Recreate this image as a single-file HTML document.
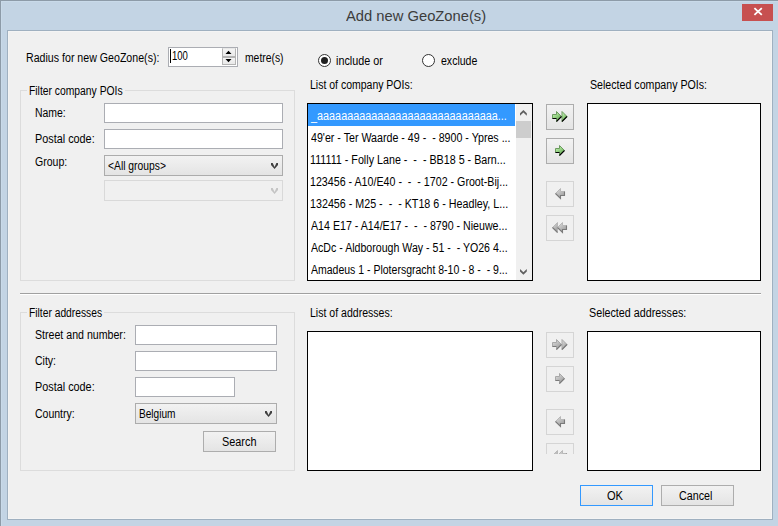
<!DOCTYPE html>
<html><head><meta charset="utf-8">
<style>
*{margin:0;padding:0;box-sizing:border-box}
html,body{width:778px;height:526px;overflow:hidden;background:#c3d4e4}
body{position:relative;font-family:"Liberation Sans",sans-serif;font-size:12px;color:#000}
.a{position:absolute}
.t{position:absolute;white-space:pre;line-height:14px;transform-origin:0 0}
.tb{position:absolute;background:#fff;border:1px solid #abadb3}
.grp{position:absolute;border:1px solid #dcdcdc}
.gl{position:absolute;background:#f0f0f0;}
.lb{position:absolute;background:#fff;border:1px solid #000}
.cb{position:absolute;border:1px solid #acacac;background:linear-gradient(#f2f2f2,#e4e4e4)}
.cbd{position:absolute;border:1px solid #d9d9d9;background:#f0f0f0}
.btn{position:absolute;border:1px solid #adadad;background:linear-gradient(#f2f2f2,#e4e4e4)}
.btnd{position:absolute;border:1px solid #d5d5d5;background:#f0f0f0}
svg{position:absolute;overflow:visible}
svg.cl{overflow:hidden}
</style></head><body>
<div class="a" style="left:0;top:0;width:778px;height:526px;background:#c3d4e4;border-left:1px solid #8d9ba8;border-top:1px solid #8d9ba8"></div>
<div class="a" style="left:1px;top:1px;width:777px;height:525px;border-left:1px solid #c9dae9;border-top:1px solid #c9dae9"></div>
<div class="a" style="left:7px;top:30px;width:766px;height:490px;border:1px solid #9fb0c0;background:#f0f0f0"></div>
<div class="a" style="left:8px;top:31px;width:764px;height:488px;border:1px solid #f4f4f4"></div>
<div class="t" style="left:346px;top:7px;font-size:15px;line-height:18px;color:#3c3c3c;transform:scaleX(0.983)">Add new GeoZone(s)</div>
<div class="a" style="left:742px;top:4px;width:31px;height:17px;background:#c75050"></div>
<svg style="left:742px;top:4px" width="31" height="17"><path d="M12.4 4.1 L19.8 10.9 M19.8 4.1 L12.4 10.9" stroke="#fff" stroke-width="1.8"/></svg>
<div class="t" style="left:26.10px;top:51px;color:#000;transform:scaleX(0.8852);">Radius for new GeoZone(s):</div>
<div class="tb" style="left:168px;top:47px;width:70px;height:20px"></div>
<div class="a" style="left:222px;top:48px;width:15px;height:18px;background:#fff"></div>
<div class="a" style="left:222px;top:48px;width:14px;height:9px;border:1px solid #b4b4b4;border-top-color:#e8e8e8;background:linear-gradient(#f4f4f4,#e9e9e9)"></div>
<div class="a" style="left:222px;top:57px;width:14px;height:8px;border:1px solid #b4b4b4;background:linear-gradient(#f4f4f4,#e9e9e9)"></div>
<svg style="left:222px;top:48px" width="14" height="18"><path d="M3.5 6 L6.5 2.8 L9.5 6 Z M3.5 11 L9.5 11 L6.5 14.2 Z" fill="#000"/></svg>
<div class="a" style="left:170px;top:49px;width:1px;height:14px;background:#000"></div>
<div class="t" style="left:171.80px;top:49px;color:#000;transform:scaleX(0.7947);">100</div>
<div class="t" style="left:245.30px;top:51px;color:#000;transform:scaleX(0.8628);">metre(s)</div>
<div class="a" style="left:318px;top:54px;width:13px;height:13px;border-radius:50%;border:1px solid #333;background:#fff"></div>
<div class="a" style="left:321px;top:57px;width:7px;height:7px;border-radius:50%;background:#1f1f1f"></div>
<div class="t" style="left:336.10px;top:54px;color:#000;transform:scaleX(0.8980);">include or</div>
<div class="a" style="left:422px;top:54px;width:13px;height:13px;border-radius:50%;border:1px solid #333;background:#fff"></div>
<div class="t" style="left:441.00px;top:54px;color:#000;transform:scaleX(0.8780);">exclude</div>
<div class="grp" style="left:20px;top:90px;width:275px;height:191px"></div>
<div class="gl" style="left:27px;top:84px;width:98px;height:12px"></div>
<div class="t" style="left:29.00px;top:84px;color:#000;transform:scaleX(0.8611);">Filter company POIs</div>
<div class="t" style="left:35.00px;top:106px;color:#000;transform:scaleX(0.8706);">Name:</div>
<div class="tb" style="left:104px;top:103px;width:179px;height:20px"></div>
<div class="t" style="left:35.00px;top:132px;color:#000;transform:scaleX(0.9031);">Postal code:</div>
<div class="tb" style="left:104px;top:129px;width:179px;height:20px"></div>
<div class="t" style="left:34.90px;top:155px;color:#000;transform:scaleX(0.8778);">Group:</div>
<div class="cb" style="left:104px;top:155px;width:179px;height:21px"></div>
<div class="t" style="left:108.20px;top:159px;color:#000;transform:scaleX(0.8597);">&lt;All groups&gt;</div>
<svg style="left:271px;top:163px" width="7.2" height="6.2" class="cl"><polygon points="0,0 1.7,0 3.55,3.9 5.4,0 7.1,0 7.1,2 3.55,6 0,2" fill="#404040"/></svg>
<div class="cbd" style="left:104px;top:180px;width:179px;height:21px"></div>
<svg style="left:271px;top:188px" width="7.2" height="6.2" class="cl"><polygon points="0,0 1.7,0 3.55,3.9 5.4,0 7.1,0 7.1,2 3.55,6 0,2" fill="#c4c4c4"/></svg>
<div class="t" style="left:310.30px;top:78px;color:#000;transform:scaleX(0.8741);">List of company POIs:</div>
<div class="lb" style="left:307px;top:103px;width:226px;height:178px"></div>
<div class="a" style="left:308px;top:104px;width:207px;height:22px;background:#3399ff"></div>
<div class="a" style="left:516px;top:104px;width:16px;height:176px;background:#f0f0f0"></div>
<div class="a" style="left:516px;top:121px;width:15px;height:17px;background:#cdcdcd"></div>
<svg style="left:520px;top:110px" width="8" height="7"><polygon points="0,3.3 3.4,0 6.8,3.3 6.8,5.8 3.4,2.5 0,5.8" fill="#606060"/></svg>
<svg style="left:520px;top:269px" width="8" height="7"><polygon points="0,0 3.4,3.3 6.8,0 6.8,2.5 3.4,5.8 0,2.5" fill="#606060"/></svg>
<div class="t" style="left:311.00px;top:109px;color:#fff;transform:scaleX(0.9028);">_aaaaaaaaaaaaaaaaaaaaaaaaaaaaaa...</div>
<div class="t" style="left:311.00px;top:131px;color:#000;transform:scaleX(0.8884);">49'er - Ter Waarde - 49 -  - 8900 - Ypres ...</div>
<div class="t" style="left:310.00px;top:153px;color:#000;transform:scaleX(0.8940);">111111 - Folly Lane -  -  - BB18 5 - Barn...</div>
<div class="t" style="left:310.00px;top:175px;color:#000;transform:scaleX(0.8891);">123456 - A10/E40 -  -  - 1702 - Groot-Bij...</div>
<div class="t" style="left:310.00px;top:197px;color:#000;transform:scaleX(0.8932);">132456 - M25 -  -  - KT18 6 - Headley, L...</div>
<div class="t" style="left:311.00px;top:219px;color:#000;transform:scaleX(0.8869);">A14 E17 - A14/E17 -  -  - 8790 - Nieuwe...</div>
<div class="t" style="left:311.00px;top:241px;color:#000;transform:scaleX(0.8829);">AcDc - Aldborough Way - 51 -  - YO26 4...</div>
<div class="t" style="left:311.00px;top:263px;color:#000;transform:scaleX(0.8750);">Amadeus 1 - Plotersgracht 8-10 - 8 -  - 9...</div>
<div class="t" style="left:590.30px;top:78px;color:#000;transform:scaleX(0.8862);">Selected company POIs:</div>
<div class="lb" style="left:587px;top:103px;width:174px;height:178px"></div>
<div class="btn" style="left:546px;top:104px;width:28px;height:26px"></div>
<div class="btn" style="left:546px;top:138px;width:28px;height:26px"></div>
<div class="btnd" style="left:546px;top:181px;width:28px;height:26px"></div>
<div class="btnd" style="left:546px;top:215px;width:28px;height:26px"></div>
<div class="a" style="left:20px;top:293px;width:741px;height:1px;background:#a0a0a0"></div>
<div class="a" style="left:20px;top:294px;width:741px;height:1px;background:#fff"></div>
<div class="grp" style="left:20px;top:312px;width:275px;height:159px"></div>
<div class="gl" style="left:27px;top:306px;width:77px;height:12px"></div>
<div class="t" style="left:28.90px;top:306px;color:#000;transform:scaleX(0.8560);">Filter addresses</div>
<div class="t" style="left:35.10px;top:328px;color:#000;transform:scaleX(0.8842);">Street and number:</div>
<div class="tb" style="left:135px;top:325px;width:142px;height:20px"></div>
<div class="t" style="left:34.60px;top:354px;color:#000;transform:scaleX(0.8739);">City:</div>
<div class="tb" style="left:135px;top:351px;width:142px;height:20px"></div>
<div class="t" style="left:35.10px;top:380px;color:#000;transform:scaleX(0.9031);">Postal code:</div>
<div class="tb" style="left:135px;top:377px;width:100px;height:20px"></div>
<div class="t" style="left:34.60px;top:407px;color:#000;transform:scaleX(0.8756);">Country:</div>
<div class="cb" style="left:135px;top:403px;width:142px;height:21px"></div>
<div class="t" style="left:139.10px;top:407px;color:#000;transform:scaleX(0.8429);">Belgium</div>
<svg style="left:265px;top:411px" width="7.2" height="6.2" class="cl"><polygon points="0,0 1.7,0 3.55,3.9 5.4,0 7.1,0 7.1,2 3.55,6 0,2" fill="#404040"/></svg>
<div class="btn" style="left:203px;top:431px;width:73px;height:21px"></div>
<div class="t" style="left:221.90px;top:435px;color:#000;transform:scaleX(0.9056);">Search</div>
<div class="t" style="left:310.10px;top:306px;color:#000;transform:scaleX(0.8783);">List of addresses:</div>
<div class="lb" style="left:307px;top:331px;width:226px;height:140px"></div>
<div class="t" style="left:589.00px;top:306px;color:#000;transform:scaleX(0.8944);">Selected addresses:</div>
<div class="lb" style="left:587px;top:331px;width:174px;height:140px"></div>
<div class="btnd" style="left:546px;top:332px;width:28px;height:26px"></div>
<div class="btnd" style="left:546px;top:366px;width:28px;height:26px"></div>
<div class="btnd" style="left:546px;top:409px;width:28px;height:26px"></div>
<div class="a" style="left:546px;top:443px;width:28px;height:11px;overflow:hidden"><div class="btnd" style="left:0;top:0;width:28px;height:26px"></div></div>
<svg style="left:0;top:0" width="778" height="526"><defs><linearGradient id="gg" x1="0" y1="0" x2="0.7" y2="1"><stop offset="0" stop-color="#d4fcc6"/><stop offset="0.5" stop-color="#98d486"/><stop offset="1" stop-color="#5da04c"/></linearGradient><linearGradient id="gy" x1="0" y1="0" x2="0.7" y2="1"><stop offset="0" stop-color="#e2e2e2"/><stop offset="0.5" stop-color="#bfbfbf"/><stop offset="1" stop-color="#9c9c9c"/></linearGradient><clipPath id="cll"><rect x="540" y="0" width="40" height="226"/></clipPath></defs><g transform="translate(0,0)"><polygon points="552.5,114.5 556.5,114.5 556.5,111.5 561.5,116.5 556.5,121.5 556.5,118.5 552.5,118.5" fill="url(#gg)" stroke="#6d9a60" stroke-width="1" stroke-linejoin="miter"/><polygon points="562,111.5 567,116.5 562,121.5" fill="url(#gg)" stroke="#6d9a60" stroke-width="1" stroke-linejoin="miter"/><path d="M552.5 118.5 L556.5 118.5 M556.5 121.5 L561.5 116.5 M562 121.5 L567 116.5" stroke="#000" stroke-width="1.1" fill="none"/><polygon points="555.5,148.5 559.5,148.5 559.5,145.5 564.5,150.5 559.5,155.5 559.5,152.5 555.5,152.5" fill="url(#gg)" stroke="#6d9a60" stroke-width="1" stroke-linejoin="miter"/><path d="M555.5 152.5 L559.5 152.5 M559.5 155.5 L564.5 150.5" stroke="#000" stroke-width="1.1" fill="none"/><polygon points="555.5,193.5 560.5,188.5 560.5,191.5 564.5,191.5 564.5,195.5 560.5,195.5 560.5,198.5" fill="url(#gy)" stroke="#b8b8b8" stroke-width="1" stroke-linejoin="miter"/><path d="M555.5 193.5 L560.5 198.5 L560.5 195.5 L564.5 195.5 L564.5 191.5" stroke="#7a7a7a" stroke-width="1.1" fill="none"/><polygon points="557.5,227.5 562.5,222.5 562.5,225.5 566.5,225.5 566.5,229.5 562.5,229.5 562.5,232.5" fill="url(#gy)" stroke="#b8b8b8" stroke-width="1" stroke-linejoin="miter"/><polygon points="552.5,227.5 557.5,222.5 557.5,232.5" fill="url(#gy)" stroke="#b8b8b8" stroke-width="1" stroke-linejoin="miter"/><path d="M552.5 227.5 L557.5 232.5 M557.5 227.5 L562.5 232.5 L562.5 229.5 L566.5 229.5 L566.5 225.5" stroke="#7a7a7a" stroke-width="1.1" fill="none"/></g><g transform="translate(0,228)"><polygon points="552.5,114.5 556.5,114.5 556.5,111.5 561.5,116.5 556.5,121.5 556.5,118.5 552.5,118.5" fill="url(#gy)" stroke="#a8a8a8" stroke-width="1" stroke-linejoin="miter"/><polygon points="562,111.5 567,116.5 562,121.5" fill="url(#gy)" stroke="#a8a8a8" stroke-width="1" stroke-linejoin="miter"/><path d="M552.5 118.5 L556.5 118.5 M556.5 121.5 L561.5 116.5 M562 121.5 L567 116.5" stroke="#7a7a7a" stroke-width="1.1" fill="none"/><polygon points="555.5,148.5 559.5,148.5 559.5,145.5 564.5,150.5 559.5,155.5 559.5,152.5 555.5,152.5" fill="url(#gy)" stroke="#a8a8a8" stroke-width="1" stroke-linejoin="miter"/><path d="M555.5 152.5 L559.5 152.5 M559.5 155.5 L564.5 150.5" stroke="#7a7a7a" stroke-width="1.1" fill="none"/><polygon points="555.5,193.5 560.5,188.5 560.5,191.5 564.5,191.5 564.5,195.5 560.5,195.5 560.5,198.5" fill="url(#gy)" stroke="#b8b8b8" stroke-width="1" stroke-linejoin="miter"/><path d="M555.5 193.5 L560.5 198.5 L560.5 195.5 L564.5 195.5 L564.5 191.5" stroke="#7a7a7a" stroke-width="1.1" fill="none"/><g clip-path="url(#cll)"><polygon points="557.5,227.5 562.5,222.5 562.5,225.5 566.5,225.5 566.5,229.5 562.5,229.5 562.5,232.5" fill="url(#gy)" stroke="#b8b8b8" stroke-width="1" stroke-linejoin="miter"/><polygon points="552.5,227.5 557.5,222.5 557.5,232.5" fill="url(#gy)" stroke="#b8b8b8" stroke-width="1" stroke-linejoin="miter"/><path d="M552.5 227.5 L557.5 232.5 M557.5 227.5 L562.5 232.5 L562.5 229.5 L566.5 229.5 L566.5 225.5" stroke="#7a7a7a" stroke-width="1.1" fill="none"/></g></g></svg>
<div class="a" style="left:580px;top:485px;width:73px;height:21px;border:1px solid #3399ff;background:linear-gradient(#f2f2f2,#e4e4e4)"></div>
<div class="t" style="left:607.40px;top:489px;color:#000;transform:scaleX(0.9235);">OK</div>
<div class="btn" style="left:661px;top:485px;width:73px;height:21px"></div>
<div class="t" style="left:679.40px;top:489px;color:#000;transform:scaleX(0.8919);">Cancel</div>
</body></html>
